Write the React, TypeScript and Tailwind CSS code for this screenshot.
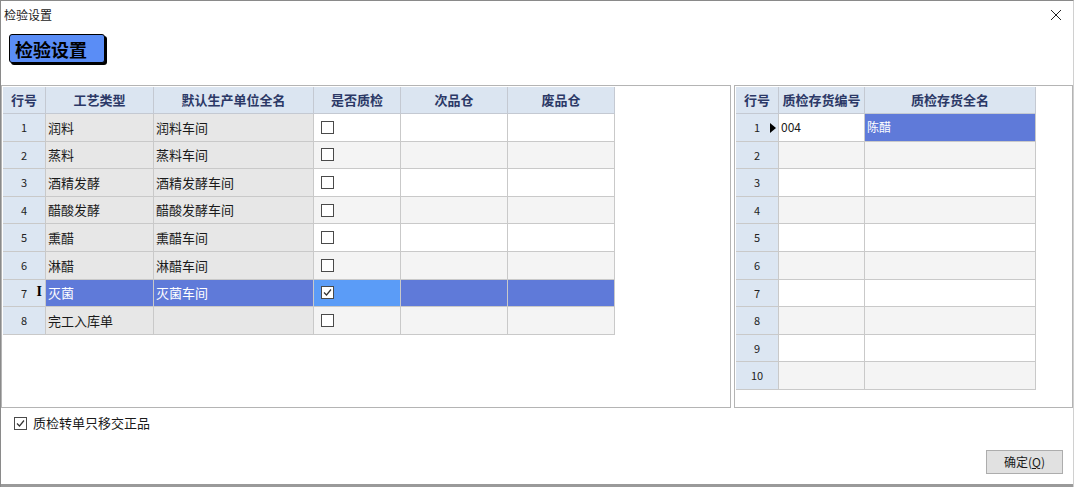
import React from 'react';

const FONT = '"Noto Sans CJK SC", "Liberation Sans", sans-serif';

type LeftRow = { no: number; type: string; unit: string; checked: boolean };

const leftRows: LeftRow[] = [
  { no: 1, type: '润料', unit: '润料车间', checked: false },
  { no: 2, type: '蒸料', unit: '蒸料车间', checked: false },
  { no: 3, type: '酒精发酵', unit: '酒精发酵车间', checked: false },
  { no: 4, type: '醋酸发酵', unit: '醋酸发酵车间', checked: false },
  { no: 5, type: '熏醋', unit: '熏醋车间', checked: false },
  { no: 6, type: '淋醋', unit: '淋醋车间', checked: false },
  { no: 7, type: '灭菌', unit: '灭菌车间', checked: true },
  { no: 8, type: '完工入库单', unit: '', checked: false },
];

function Check({ checked }: { checked: boolean }) {
  return (
    <div className="w-[13px] h-[13px] border border-[#4a4a4a] bg-white flex items-center justify-center">
      {checked && (
        <svg width="11" height="11" viewBox="0 0 11 11">
          <path d="M2 5.5 L4.5 8 L9 2.5" fill="none" stroke="#333" strokeWidth="1.2" />
        </svg>
      )}
    </div>
  );
}

function HeadCell({ w, children }: { w: number; children: React.ReactNode }) {
  return (
    <div
      className="h-full flex items-center justify-center border-r border-[#c4c9d2] text-[13px] font-bold text-[#2b3866] shrink-0"
      style={{ width: w }}
    >
      {children}
    </div>
  );
}

function LeftGrid() {
  const widths = [43, 108, 160, 87, 107, 107];
  return (
    <div className="w-[612px]">
      <div className="flex h-[27px] bg-[#dbe5f1] border-b border-[#c4c9d2]">
        <HeadCell w={widths[0]}>行号</HeadCell>
        <HeadCell w={widths[1]}>工艺类型</HeadCell>
        <HeadCell w={widths[2]}>默认生产单位全名</HeadCell>
        <HeadCell w={widths[3]}>是否质检</HeadCell>
        <HeadCell w={widths[4]}>次品仓</HeadCell>
        <HeadCell w={widths[5]}>废品仓</HeadCell>
      </div>
      {leftRows.map((r) => {
        const sel = r.no === 7;
        const even = r.no % 2 === 0;
        const plain = sel ? 'bg-[#5f7ad9]' : even ? 'bg-[#f4f4f4]' : 'bg-white';
        const ro = sel ? 'bg-[#5f7ad9] text-white' : 'bg-[#e7e7e7] text-[#1a1a1a]';
        return (
          <div key={r.no} className="flex h-[27.6px] border-b border-[#c9c9c9] text-[13px]">
            <div className="relative w-[43px] shrink-0 bg-[#dce6f2] border-r border-[#c9c9c9] flex items-center justify-center text-[11px] text-[#222]">
              {r.no}
              {sel && (
                <span className="absolute right-[3px] top-[5px] text-[14px] font-bold leading-none text-black" style={{ fontFamily: '"Liberation Serif", serif' }}>
                  I
                </span>
              )}
            </div>
            <div className={`w-[108px] shrink-0 border-r border-[#c9c9c9] flex items-center pl-[2px] ${ro}`}>{r.type}</div>
            <div className={`w-[160px] shrink-0 border-r border-[#c9c9c9] flex items-center pl-[2px] ${ro}`}>{r.unit}</div>
            <div className={`w-[87px] shrink-0 border-r border-[#c9c9c9] flex items-center pl-[7px] ${sel ? 'bg-[#5b9cf7]' : plain}`}>
              <Check checked={r.checked} />
            </div>
            <div className={`w-[107px] shrink-0 border-r border-[#c9c9c9] ${plain}`} />
            <div className={`w-[107px] shrink-0 border-r border-[#c9c9c9] ${plain}`} />
          </div>
        );
      })}
    </div>
  );
}

function RightGrid() {
  const rows = Array.from({ length: 10 }, (_, i) => i + 1);
  return (
    <div className="w-[300px]">
      <div className="flex h-[27px] bg-[#dbe5f1] border-b border-[#c4c9d2]">
        <HeadCell w={43}>行号</HeadCell>
        <HeadCell w={86}>质检存货编号</HeadCell>
        <HeadCell w={171}>质检存货全名</HeadCell>
      </div>
      {rows.map((n) => {
        const plain = n % 2 === 0 ? 'bg-[#f4f4f4]' : 'bg-white';
        return (
          <div key={n} className="flex h-[27.6px] border-b border-[#c9c9c9] text-[12px]">
            <div className="relative w-[43px] shrink-0 bg-[#dce6f2] border-r border-[#c9c9c9] flex items-center justify-center text-[11px] text-[#222]">
              {n}
              {n === 1 && (
                <svg className="absolute right-[2px] top-[9px]" width="6" height="10" viewBox="0 0 6 10">
                  <path d="M0 0 L6 5 L0 10 Z" fill="#000" />
                </svg>
              )}
            </div>
            <div className={`w-[86px] shrink-0 border-r border-[#c9c9c9] flex items-center pl-[2px] ${n === 1 ? 'bg-white' : plain}`}>
              {n === 1 ? '004' : ''}
            </div>
            <div className={`w-[171px] shrink-0 border-r border-[#c9c9c9] flex items-center pl-[2px] ${n === 1 ? 'bg-[#5f7ad9] text-white' : plain}`}>
              {n === 1 ? '陈醋' : ''}
            </div>
          </div>
        );
      })}
    </div>
  );
}

export default function App() {
  return (
    <div
      className="w-[1074px] h-[487px] bg-white flex flex-col border-t border-l border-[#8a8a8a] border-r border-r-[#d0d0d0] text-[#1a1a1a] overflow-hidden"
      style={{ fontFamily: FONT }}
    >
      <div className="h-[27px] flex items-center justify-between pl-[3px] pr-[11px] text-[12px]">
        <span>检验设置</span>
        <svg width="12" height="12" viewBox="0 0 12 12">
          <path d="M1 1 L11 11 M11 1 L1 11" stroke="#222" strokeWidth="1" />
        </svg>
      </div>

      <div className="h-[57px] pt-[6px] pl-[8px]">
        <div className="w-[96px] h-[29px] rounded-[3px] border-[1.5px] border-black bg-[#5a8df6] shadow-[2px_2px_0_#000] flex items-center pl-[5px] text-[18px] font-bold leading-none text-black">
          检验设置
        </div>
      </div>

      <div className="flex h-[323px]">
        <div className="w-[730px] h-full border border-[#b4b4b4] pt-[1px] pl-[1px]">
          <LeftGrid />
        </div>
        <div className="w-[339px] h-full ml-[3px] border border-[#b4b4b4] pt-[1px] pl-[1px]">
          <RightGrid />
        </div>
      </div>

      <div className="flex items-center gap-[6px] pl-[13px] mt-[8px] h-[14px] text-[13px]">
        <Check checked />
        <span>质检转单只移交正品</span>
      </div>

      <div className="flex justify-end pr-[10px] mt-[20px]">
        <button className="w-[77px] h-[24px] bg-[#e1e1e1] border border-[#adadad] text-[12px] flex items-center justify-center">
          确定(<span className="underline">Q</span>)
        </button>
      </div>

      <div className="mt-auto h-[3px] bg-[#9a9a9a]" />
    </div>
  );
}
